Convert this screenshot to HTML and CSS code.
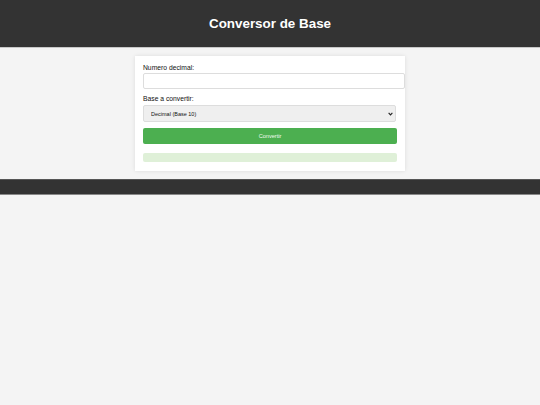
FILE: index.html
```html
<!DOCTYPE html>
<html lang="es">
<head>
<meta charset="utf-8">
<title>Conversor de Base</title>
<link rel="stylesheet" href="styles.css">
</head>
<body>
<header class="site-header">
  <h1 class="title">Conversor de Base</h1>
</header>
<main class="card">
  <label class="field-label" for="num">Numero decimal:</label>
  <input class="text-input" id="num" type="text">
  <label class="field-label second" for="base">Base a convertir:</label>
  <div class="select-wrap">
    <select class="select" id="base">
      <option>Decimal (Base 10)</option>
    </select>
    <svg class="chev" viewBox="0 0 8 6" width="5" height="4" aria-hidden="true"><path d="M1 1.2 L4 4.4 L7 1.2" fill="none" stroke="#222" stroke-width="1.8"/></svg>
  </div>
  <button class="btn" type="button">Convertir</button>
  <div class="result"></div>
</main>
<footer class="site-footer"></footer>
</body>
</html>
```
FILE: styles.css
```css
html, body {
  margin: 0;
  padding: 0;
}
body {
  background: #f4f4f4;
  font-family: "Liberation Sans", Arial, sans-serif;
  color: #111;
}
.site-header {
  background: #333;
  height: 47px;
  display: flex;
  align-items: center;
  justify-content: center;
  border-bottom: 1px solid #c8c8c8;
}
.title {
  margin: 0;
  color: #fff;
  font-size: 13.4px;
  font-weight: bold;
  line-height: 1;
  padding-top: 1px;
}
.card {
  display: block;
  box-sizing: border-box;
  width: 270px;
  margin: 8px auto 0;
  background: #fff;
  padding: 8px 8px 9px;
  box-shadow: 0 0 4px rgba(0, 0, 0, 0.1);
}
.field-label {
  display: block;
  font-size: 6.75px;
  line-height: 8px;
  height: 8px;
  margin-bottom: 1px;
}
.field-label.second {
  margin-top: 6px;
  margin-bottom: 2px;
}
.text-input {
  display: block;
  box-sizing: border-box;
  width: 262px;
  height: 16px;
  margin: 0;
  padding: 0 4px;
  border: 1px solid #ddd;
  border-radius: 2px;
  font-size: 6.75px;
  font-family: inherit;
  background: #fff;
}
.select-wrap {
  position: relative;
  width: 253px;
}
.select {
  display: block;
  box-sizing: border-box;
  width: 253px;
  height: 17px;
  margin: 0;
  padding: 0 7px;
  border: 1px solid #ddd;
  border-radius: 2px;
  background: #efefef;
  font-family: inherit;
  font-size: 5.5px;
  color: #111;
  appearance: none;
  -webkit-appearance: none;
}
.chev {
  position: absolute;
  right: 3px;
  top: 6.5px;
}
.btn {
  display: block;
  box-sizing: border-box;
  width: 254px;
  height: 16px;
  margin: 6px 0 0;
  padding: 0;
  border: none;
  border-radius: 2px;
  background: #4caf50;
  color: #f2fbf2;
  font-family: inherit;
  font-size: 5.6px;
}
.result {
  box-sizing: border-box;
  width: 254px;
  height: 9px;
  margin-top: 9px;
  background: #dff0d8;
  border-radius: 2px;
}
.site-footer {
  background: #333;
  height: 14px;
  margin-top: 8px;
  border-top: 1px solid #555;
  border-bottom: 1px solid #888;
}
```
